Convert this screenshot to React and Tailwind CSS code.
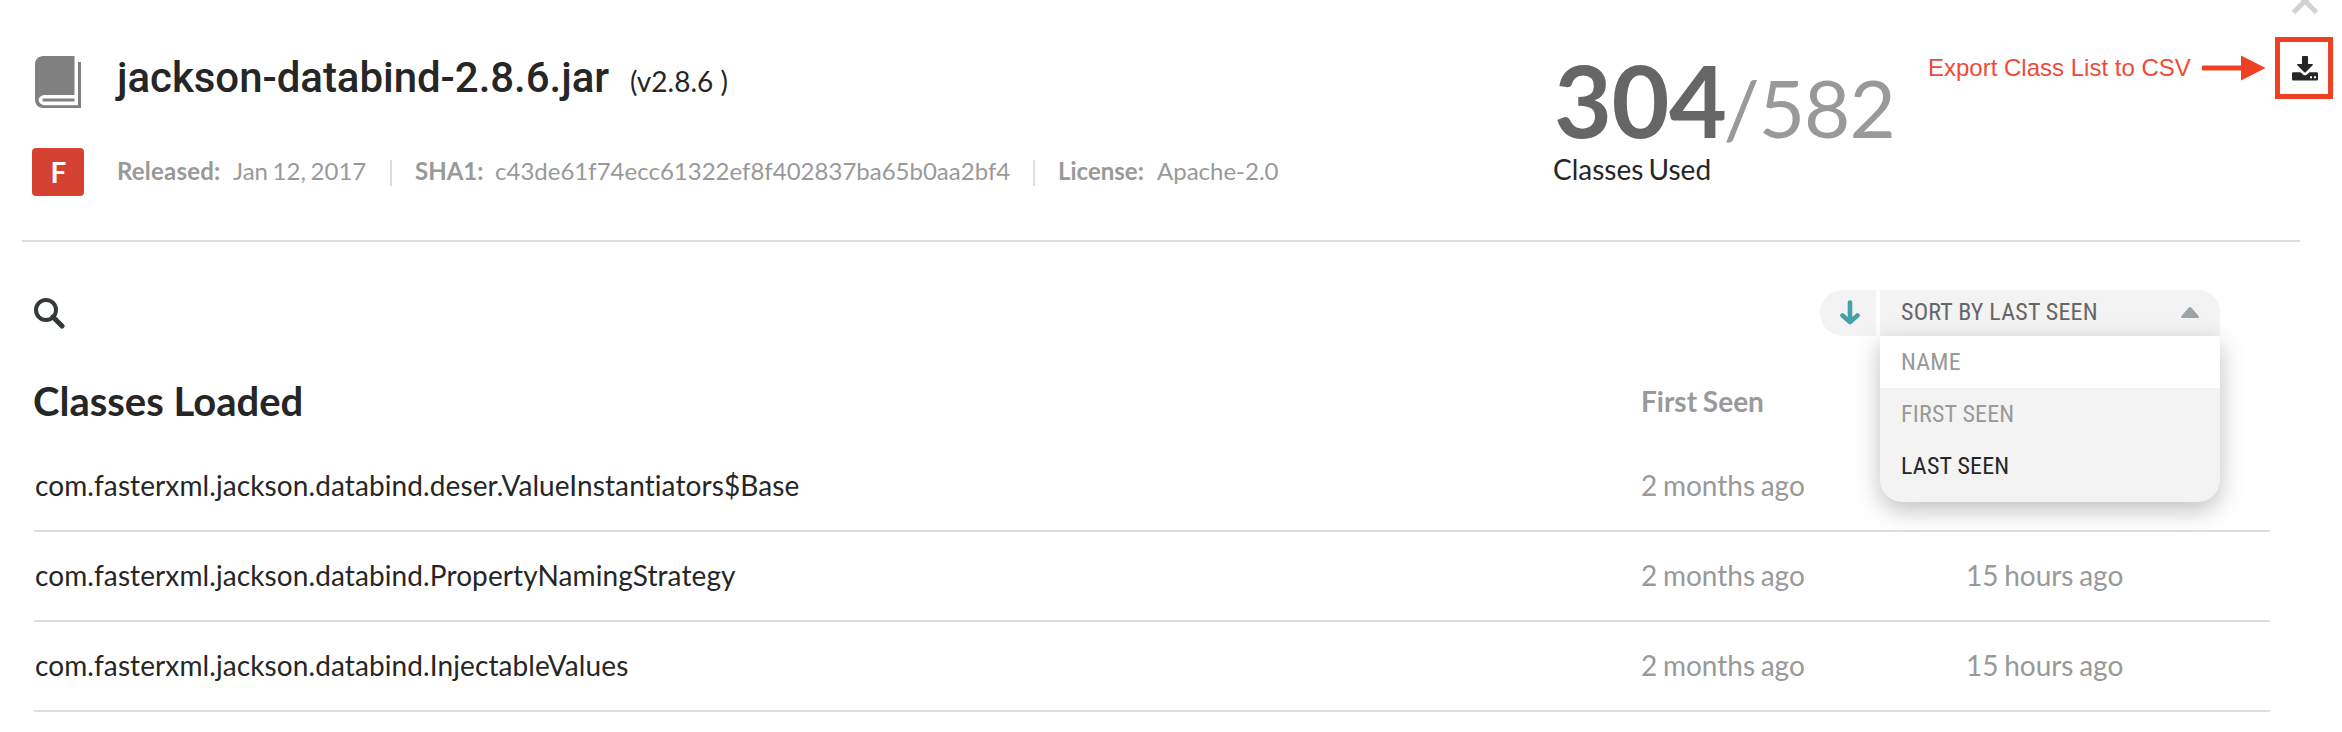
import React from "react";

const rows = [
  { name: "com.fasterxml.jackson.databind.deser.ValueInstantiators$Base", first: "2 months ago", last: "" },
  { name: "com.fasterxml.jackson.databind.PropertyNamingStrategy", first: "2 months ago", last: "15 hours ago" },
  { name: "com.fasterxml.jackson.databind.InjectableValues", first: "2 months ago", last: "15 hours ago" },
];

function BookIcon() {
  return (
    <svg className="block h-[52px] w-[46px]" viewBox="0 0 46 52" fill="#808080">
      <path fillRule="evenodd" d="M8 0H39.500V39H10C6.500 39 3.700 41.200 3.700 44S6.500 49.300 10 49.300H43V6H46V52H8C3.600 52 0 48.400 0 44V8C0 3.600 3.600 0 8 0Z" />
      <path d="M8 42.500H39.500V45.500H8Q6.500 44 8 42.500Z" />
    </svg>
  );
}

function DownloadIcon() {
  return (
    <svg className="ml-[2px] block h-[25px] w-[26px]" viewBox="0 0 26 25" fill="#262626">
      <path d="M10.800 0H15.200Q16 0 16 .8V8H20.200Q21.600 8 20.600 9.200L13.700 16.200Q13 16.800 12.300 16.200L5.400 9.200Q4.400 8 5.800 8H10V.8Q10 0 10.800 0Z" />
      <path fillRule="evenodd" d="M1.300 16.300H8.500L11 18.500Q13 20.200 15 18.500L17.500 16.300H24.700Q26 16.300 26 17.600V23.300Q26 24.600 24.700 24.600H1.300Q0 24.600 0 23.300V17.600Q0 16.300 1.300 16.300ZM18 20.200V22.200H20V20.200ZM22 20.200V22.200H24V20.200Z" />
    </svg>
  );
}

function MetaDivider() {
  return <span className="mt-px h-[26px] w-[2px] bg-[#dddddd]" />;
}

export default function App() {
  return (
    <div className="relative h-[732px] w-[2342px] overflow-hidden bg-white font-['Lato',sans-serif] text-[#262626]">
      <header className="ml-[22px] flex h-[242px] w-[2278px] border-b-2 border-[#dcdcdc]">
        <div className="ml-[10px] w-[1521px] shrink-0 pt-[56px]">
          <div className="flex h-[52px]">
            <div className="ml-[3px] w-[82px]">
              <BookIcon />
            </div>
            <div className="flex h-[48px] items-baseline whitespace-nowrap">
              <h1 className="font-['Roboto',sans-serif] text-[42px] leading-[44px] font-medium tracking-[-0.05px]">jackson-databind-2.8.6.jar</h1>
              <span className="ml-[21px] text-[28px] leading-[44px]">(v2.8.6 )</span>
            </div>
          </div>
          <div className="mt-[40px] flex h-[48px] items-center text-[24px] leading-[46px] whitespace-nowrap text-[#999999] [word-spacing:-1.5px]">
            <span className="mr-[33px] flex h-[48px] w-[52px] items-center justify-center rounded bg-[#d64232] pl-px text-[28px] font-bold text-white">
              F
            </span>
            <span className="mb-[2px] w-[116px] font-bold tracking-[0.2px]">Released:</span>
            <span className="mb-[2px] w-[157px]">Jan 12, 2017</span>
            <MetaDivider />
            <span className="mb-[2px] ml-[23px] w-[80px] font-bold">SHA1:</span>
            <span className="mb-[2px] w-[538px]">c43de61f74ecc61322ef8f402837ba65b0aa2bf4</span>
            <MetaDivider />
            <span className="mb-[2px] ml-[23px] w-[99px] font-bold">License:</span>
            <span className="mb-[2px]">Apache-2.0</span>
          </div>
        </div>
        <div className="w-[375px] shrink-0 pt-[39px]">
          <div className="flex h-[120px] items-baseline pl-px leading-[120px]">
            <span className="text-[100px] font-bold tracking-[-0.5px] text-[#666666]">304</span>
            <span className="-ml-[3px] text-[80px] tracking-[-1px] text-[#999999]">/582</span>
          </div>
          <div className="-mt-[6px] text-[28px] leading-[32px] [word-spacing:-2px]">Classes Used</div>
        </div>
        <div className="flex h-[136px] shrink-0 items-center font-['Liberation_Sans',sans-serif] text-[24px] whitespace-nowrap text-[#ee4a38]">
          <span className="w-[274px]">Export Class List to CSV</span>
          <svg className="h-[26px] w-[64px] shrink-0" viewBox="0 0 64 26" fill="#ee4023">
            <path d="M0 10.500H39V.5L63.500 13L39 25.500V15.500H0Z" />
          </svg>
          <span className="ml-[9px] flex h-[62px] w-[58px] shrink-0 items-center justify-center border-[5px] border-[#ee4023]">
            <DownloadIcon />
          </span>
        </div>
      </header>

      <svg className="absolute top-0 left-[2291px] h-[15px] w-[28px]" viewBox="0 0 28 15" fill="none" stroke="#d2d2d2" strokeWidth="5">
        <path d="M2.500 12.500L24 -9M25.500 12.500L4 -9" />
      </svg>

      <div className="ml-[34px] flex h-[142px] w-[2186px] justify-between pt-[48px]">
        <svg className="mt-[8px] h-[31px] w-[31px]" viewBox="0 0 31 31" fill="none" stroke="#333838">
          <circle cx="12" cy="12" r="10" strokeWidth="4" />
          <path d="M19 19L28 28" strokeWidth="5" strokeLinecap="round" />
        </svg>
        <div className="relative flex h-[46px] gap-1 font-['Roboto_Condensed','Roboto',sans-serif] text-[24px] [font-stretch:75%]">
          <button className="flex h-[46px] w-[56px] items-center rounded-l-[23px] bg-[#f3f3f3] pl-[20px]">
            <svg className="mt-[-2px] h-[25px] w-[20px]" viewBox="0 0 20 25" fill="none" stroke="#45a0a8" strokeWidth="4.600" strokeLinecap="round" strokeLinejoin="round">
              <path d="M10 2.500V21M2.500 15.500L10 22L17.500 15.500" />
            </svg>
          </button>
          <button className="flex h-[46px] w-[340px] items-center justify-between rounded-tr-[22px] bg-[#f3f3f3] pr-[21px] pl-[21px] text-[#666666]">
            <span className="pb-[3px] tracking-[0.2px]">SORT BY LAST SEEN</span>
            <svg className="-mt-[2px] h-[11px] w-[18px]" viewBox="0 0 18 11" fill="#9ca4a8">
              <path d="M7.800 .6Q9 -.4 10.200 .6L17.600 9Q18.500 10.800 17 11H1Q-.5 10.800 .4 9Z" />
            </svg>
          </button>
          <ul className="absolute top-[46px] left-[60px] h-[166px] w-[340px] rounded-b-[22px] bg-[#f3f3f3] tracking-[0.2px] shadow-[0_8px_24px_rgba(0,0,0,0.25)]">
            <li className="h-[52px] bg-white pl-[21px] leading-[52px] text-[#999999]">NAME</li>
            <li className="h-[52px] pl-[21px] leading-[52px] text-[#999999]">FIRST SEEN</li>
            <li className="h-[52px] pl-[21px] leading-[52px] text-[#262626]">LAST SEEN</li>
          </ul>
        </div>
      </div>

      <section className="ml-[33px] w-[2237px]">
        <div className="grid h-[58px] grid-cols-[1608px_325px_1fr] items-start leading-[34px]">
          <h2 className="text-[40px] font-bold">Classes Loaded</h2>
          <span className="text-[28px] font-bold text-[#999999] [word-spacing:-1px]">First Seen</span>
        </div>
        {rows.map((r) => (
          <div key={r.name} className="ml-px grid h-[90px] grid-cols-[1607px_325px_1fr] items-center border-b-2 border-[#dcdcdc] pb-[2px] text-[28px] whitespace-nowrap text-[#999999] [word-spacing:-1.5px]">
            <span className="pl-px tracking-[0.1px] text-[#262626]">{r.name}</span>
            <span>{r.first}</span>
            <span>{r.last}</span>
          </div>
        ))}
      </section>
    </div>
  );
}
